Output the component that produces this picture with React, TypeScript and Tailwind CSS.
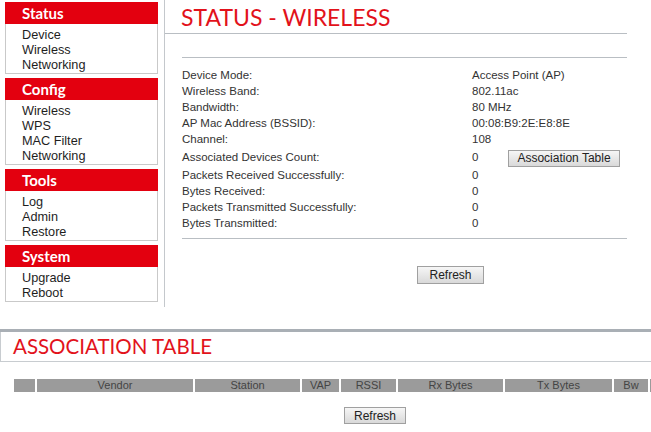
import React from 'react';

const MENU = [
  { title: 'Status', items: ['Device', 'Wireless', 'Networking'] },
  { title: 'Config', items: ['Wireless', 'WPS', 'MAC Filter', 'Networking'] },
  { title: 'Tools', items: ['Log', 'Admin', 'Restore'] },
  { title: 'System', items: ['Upgrade', 'Reboot'] },
];

const ROWS: [string, string][] = [
  ['Device Mode:', 'Access Point (AP)'],
  ['Wireless Band:', '802.11ac'],
  ['Bandwidth:', '80 MHz'],
  ['AP Mac Address (BSSID):', '00:08:B9:2E:E8:8E'],
  ['Channel:', '108'],
];

const ROWS2: [string, string][] = [
  ['Packets Received Successfully:', '0'],
  ['Bytes Received:', '0'],
  ['Packets Transmitted Successfully:', '0'],
  ['Bytes Transmitted:', '0'],
];

const COLS = [
  { label: '', w: 'w-[21px]' },
  { label: 'Vendor', w: 'w-[156px]' },
  { label: 'Station', w: 'w-[105px]' },
  { label: 'VAP', w: 'w-[37px]' },
  { label: 'RSSI', w: 'w-[55px]' },
  { label: 'Rx Bytes', w: 'w-[105px]' },
  { label: 'Tx Bytes', w: 'w-[107px]' },
  { label: 'Bw', w: 'w-[34px]' },
  { label: '', w: 'w-[20px]' },
];

const btn =
  'border border-[#a0a0a0] bg-gradient-to-b from-[#f6f6f6] to-[#d9d9d9] text-[12px] leading-none text-[#222]';

export default function App() {
  return (
    <div className="w-[651px] h-[432px] overflow-hidden bg-white font-['Liberation_Sans',Arial,sans-serif]">
      {/* Top: router status page */}
      <div className="flex h-[307px]">
        <div className="w-[164px] pl-[5px] pr-[6px] pt-[2px] flex flex-col gap-[4px]">
          {MENU.map((g) => (
            <div key={g.title}>
              <div className="h-[22px] bg-[#e3000f] pl-[17px] flex items-center text-white font-bold text-[15px] font-['Lato',sans-serif]">
                {g.title}
              </div>
              <div className="border border-t-0 border-[#c9c9c9] pl-[16px] pt-[4px]">
                {g.items.map((it) => (
                  <div key={it} className="text-[12.7px] leading-[15px] text-[#1e1e1e]">
                    {it}
                  </div>
                ))}
              </div>
            </div>
          ))}
        </div>

        <div className="flex-1 border-l border-[#c4c8cc] pr-[24px]">
          <div className="h-[34px] border-b border-[#b9bec3] pl-[16px] flex items-center">
            <h1 className="text-[#e2121b] text-[23px] font-['Lato',sans-serif] leading-none pt-[1px]">
              STATUS - WIRELESS
            </h1>
          </div>
          <div className="ml-[17px] mt-[23px] border-t border-[#b9bec3] pt-[10px]">
            {ROWS.map(([l, v]) => (
              <div key={l} className="flex h-[16px] items-center text-[11.5px] text-[#333]">
                <span className="w-[290px]">{l}</span>
                <span>{v}</span>
              </div>
            ))}
            <div className="flex h-[20px] items-center text-[11.5px] text-[#333]">
              <span className="w-[290px]">Associated Devices Count:</span>
              <span className="w-[36px]">0</span>
              <button className={`${btn} w-[112px] h-[17px]`}>Association Table</button>
            </div>
            {ROWS2.map(([l, v]) => (
              <div key={l} className="flex h-[16px] items-center text-[11.5px] text-[#333]">
                <span className="w-[290px]">{l}</span>
                <span>{v}</span>
              </div>
            ))}
            <div className="mt-[6px] border-t border-[#b9bec3] pt-[27px] pl-[235px] flex">
              <button className={`${btn} w-[67px] h-[18px]`}>Refresh</button>
            </div>
          </div>
        </div>
      </div>

      {/* Bottom: association table */}
      <div className="mt-[22px] h-[3px] bg-[#a9afb5]" />
      <div className="h-[30px] border-b border-l border-[#c8ccd0] pl-[12px] flex items-center">
        <h2 className="text-[#e2121b] text-[20.5px] font-['Lato',sans-serif] leading-none">ASSOCIATION TABLE</h2>
      </div>
      <div className="mt-[17px] pl-[14px] flex gap-[2px] whitespace-nowrap">
        {COLS.map((c, i) => (
          <div
            key={i}
            className={`${c.w} shrink-0 h-[13px] bg-[#9b9b9b] text-[11px] leading-[13px] text-[#444] text-center`}
          >
            {c.label}
          </div>
        ))}
      </div>
      <div className="mt-[15px] pl-[344px] flex">
        <button className={`${btn} w-[62px] h-[17px]`}>Refresh</button>
      </div>
    </div>
  );
}
